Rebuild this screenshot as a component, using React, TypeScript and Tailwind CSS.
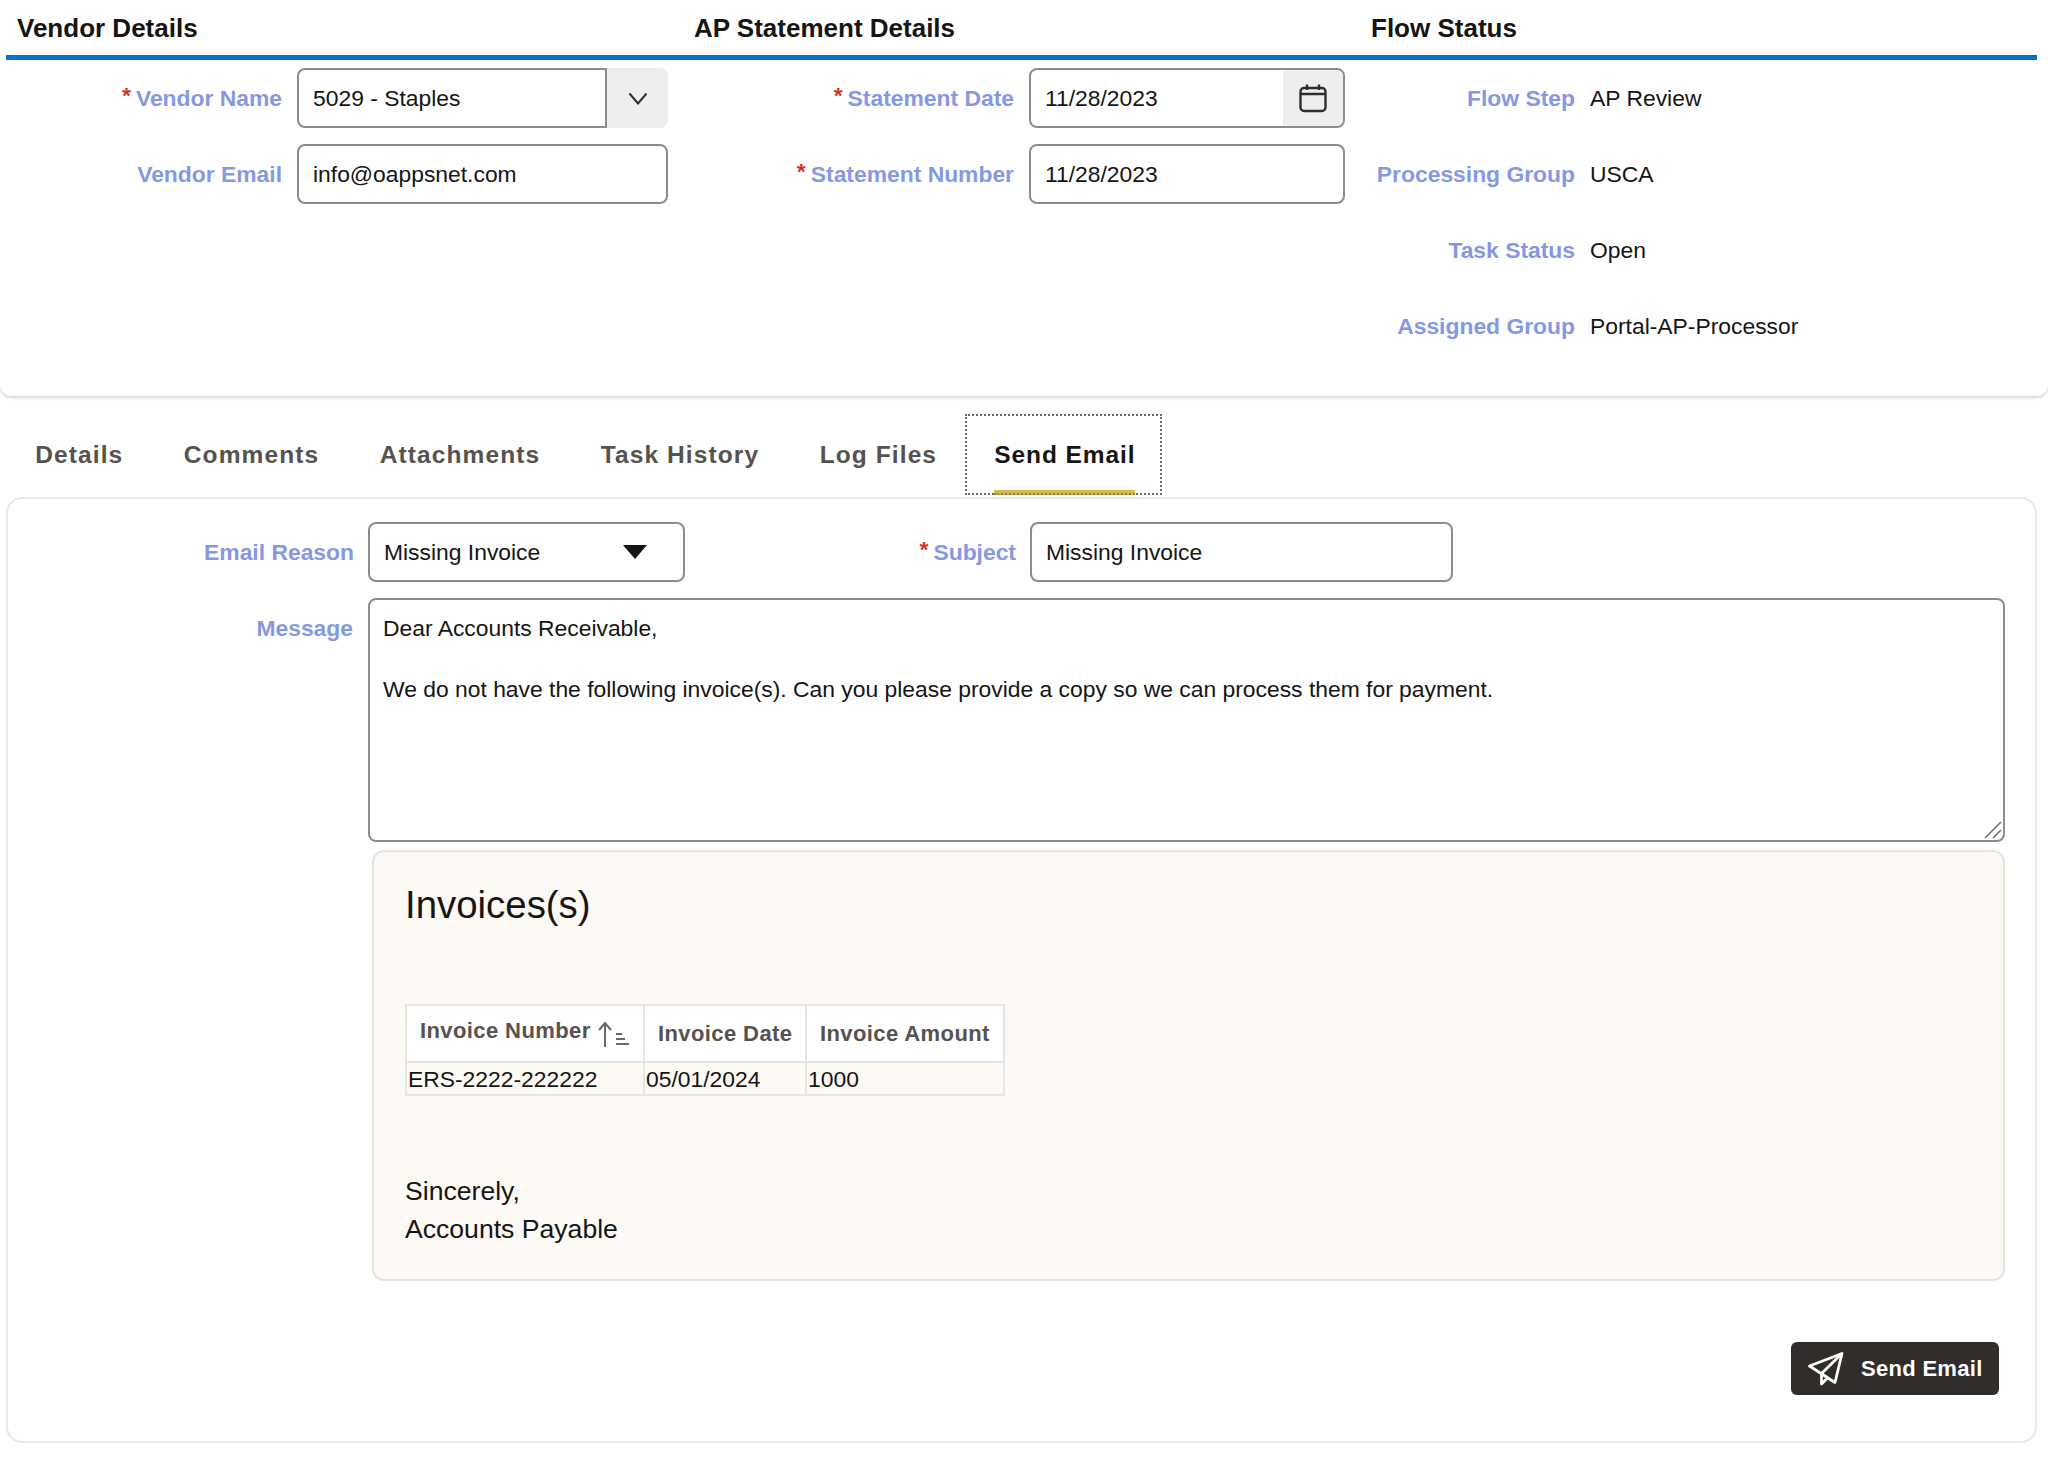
import React from "react";

const LABEL = "text-[22.86px] font-bold text-[#8598e4] leading-[30px] text-right";
const FIELD = "rounded-[8px] border-2 border-[#8c8c8c] bg-white h-[60px] flex items-center px-[14px] text-[22.86px] text-[#161513]";

function Label({ text, required, width }: { text: string; required?: boolean; width: string }) {
  return (
    <div className={`${width} shrink-0 flex justify-end items-center ${LABEL}`}>
      {required && <span className="text-[#d0342c] mr-[5px] relative -top-[3px]">*</span>}
      <span>{text}</span>
    </div>
  );
}

function Chevron() {
  return (
    <svg width="20" height="13" viewBox="0 0 20 13" fill="none" stroke="#312d2a" strokeWidth="2">
      <path d="M1.5 1.5 L10 11.5 L18.5 1.5" />
    </svg>
  );
}

function Calendar() {
  return (
    <svg width="30" height="30" viewBox="0 0 30 30" fill="none" stroke="#312d2a" strokeWidth="2.4">
      <rect x="2.5" y="5" width="25" height="23" rx="3.5" />
      <path d="M2.5 11 H27.5 M9 1.5 V7 M21 1.5 V7" />
    </svg>
  );
}

function Plane() {
  return (
    <svg width="36" height="34" viewBox="0 0 36 34" fill="none" stroke="#ffffff" strokeWidth="2.8" strokeLinejoin="round">
      <path d="M1.5 14 L34 1.5 L27 30.5 L1.5 14 Z" />
      <path d="M34 1.5 L13.5 21.5 L13.5 32 L19.5 26" />
    </svg>
  );
}

function SortIcon() {
  return (
    <svg width="34" height="28" viewBox="0 0 34 28" fill="none" stroke="#6b6865" strokeWidth="2">
      <path d="M9 27 V3 M3 10 L9 3 L15 10" />
      <path d="M20 14 H26 M20 19 H29 M20 24 H33" />
    </svg>
  );
}

const tabs = ["Details", "Comments", "Attachments", "Task History", "Log Files"];

export default function App() {
  return (
    <div className="w-[2048px] h-[1460px] bg-white overflow-hidden [font-family:'Liberation_Sans',Arial,sans-serif] text-[#161513]">
      {/* Summary section */}
      <section className="h-[396px] rounded-b-[12px] shadow-[0_2px_3px_rgba(0,0,0,0.16)] pl-[6px]">
        <div className="w-[2031px] h-[60px] border-b-[5px] border-[#0572ce] flex items-center text-[26px] font-bold leading-[32px] pt-[1px]">
          <div className="w-[688px] pl-[11px]">Vendor Details</div>
          <div className="w-[677px]">AP Statement Details</div>
          <div>Flow Status</div>
        </div>
        <div className="flex pt-[8px]">
          <div className="w-[678px] flex flex-col gap-[16px]">
            <div className="flex gap-[15px] h-[60px]">
              <Label text="Vendor Name" required width="w-[276px]" />
              <div className="w-[371px] h-[60px] flex">
                <div className={`${FIELD} flex-1 rounded-r-none`}>5029 - Staples</div>
                <div className="w-[61px] bg-[#eeeeee] rounded-r-[8px] flex items-center justify-center">
                  <Chevron />
                </div>
              </div>
            </div>
            <div className="flex gap-[15px] h-[60px]">
              <Label text="Vendor Email" width="w-[276px]" />
              <div className={`${FIELD} w-[371px]`}>info@oappsnet.com</div>
            </div>
          </div>
          <div className="w-[678px] flex flex-col gap-[16px]">
            <div className="flex gap-[15px] h-[60px]">
              <Label text="Statement Date" required width="w-[330px]" />
              <div className={`${FIELD} w-[316px] pr-0 justify-between overflow-hidden`}>
                <span>11/28/2023</span>
                <div className="w-[60px] h-full bg-[#eeeeee] flex items-center justify-center">
                  <Calendar />
                </div>
              </div>
            </div>
            <div className="flex gap-[15px] h-[60px]">
              <Label text="Statement Number" required width="w-[330px]" />
              <div className={`${FIELD} w-[316px]`}>11/28/2023</div>
            </div>
          </div>
          <div className="flex flex-col gap-[16px]">
            {[
              ["Flow Step", "AP Review"],
              ["Processing Group", "USCA"],
              ["Task Status", "Open"],
              ["Assigned Group", "Portal-AP-Processor"],
            ].map(([k, v]) => (
              <div key={k} className="flex gap-[15px] h-[60px] items-center">
                <Label text={k} width="w-[213px]" />
                <div className="text-[22.86px] leading-[30px]">{v}</div>
              </div>
            ))}
          </div>
        </div>
      </section>

      {/* Tabs */}
      <nav className="flex mt-[18px] h-[81px] pl-[5px] text-[24.5px] font-bold tracking-[1.1px] text-[#55524f]">
        {tabs.map((t) => (
          <div key={t} className="px-[30.25px] pt-[2px] flex items-center">{t}</div>
        ))}
        <div className="relative -ml-[2px] w-[197px] pl-[27px] pt-[2px] flex items-center tracking-[0.9px] border-2 border-dotted border-[#6b6b60] text-[#161513]">
          Send Email
          <span className="absolute left-[27px] w-[141px] -bottom-[2px] h-[5px] bg-[#d6b94f] border-b-2 border-dotted border-[#8a8050]" />
        </div>
      </nav>

      {/* Send email card */}
      <section className="relative mt-[2px] ml-[6px] w-[2031px] h-[946px] rounded-[16px] border-2 border-[#e9e9e8] pt-[23px] pl-[360px] pr-[29px]">
        <div className="flex h-[60px]">
          <div className="w-[317px] h-[60px] rounded-[8px] border-2 border-[#8c8c8c] flex items-center justify-between pl-[14px] pr-[36px] text-[22.86px] relative">
            <span>Missing Invoice</span>
            <svg width="24" height="14" viewBox="0 0 24 14" fill="#161513"><path d="M0 0 H24 L12 14 Z" /></svg>
            <div className="absolute right-[calc(100%+16px)] whitespace-nowrap text-[22.86px] font-bold text-[#8598e4]">Email Reason</div>
          </div>
          <div className="w-[345px] flex justify-end items-center pr-[14px] ml-0">
            <div className="flex items-center text-[22.86px] font-bold text-[#8598e4]">
              <span className="text-[#d0342c] mr-[5px] relative -top-[3px]">*</span>Subject
            </div>
          </div>
          <div className={`${FIELD} w-[423px]`}>Missing Invoice</div>
        </div>
        <div className="relative mt-[16px] w-[1637px] h-[244px]">
          <div className="absolute right-[calc(100%+15px)] top-[15px] whitespace-nowrap text-[22.86px] leading-[30px] font-bold text-[#8598e4]">Message</div>
          <textarea
            readOnly
            defaultValue={"Dear Accounts Receivable,\n\nWe do not have the following invoice(s). Can you please provide a copy so we can process them for payment."}
            className="block w-full h-full resize-none rounded-[8px] border-2 border-[#8c8c8c] px-[13px] pt-[13px] pb-[12px] text-[22.86px] leading-[30.5px] text-[#161513] outline-none"
          />
          <svg className="absolute right-[3px] bottom-[3px]" width="18" height="18" viewBox="0 0 18 18" fill="none" stroke="#6b6865" strokeWidth="1.5">
            <path d="M1 17 L17 1 M9 17 L17 9" />
          </svg>
        </div>
        <div className="ml-[4px] mt-[8px] w-[1633px] h-[431px] rounded-[12px] border-2 border-[#e7e4df] bg-[#fdf9f5] pl-[31px] pt-[28px] text-[#161513]">
          <h2 className="text-[38.4px] leading-[50px]">Invoices(s)</h2>
          <table className="mt-[74px] w-[600px] border-collapse text-[22.86px]">
            <thead>
              <tr className="h-[57px] bg-white text-[22px] font-bold tracking-[0.4px] text-[#55524f]">
                <th className="w-[238px] border-2 border-[#e8e6e2] text-left font-bold pl-[13px]">
                  <div className="flex items-center">
                    <span className="relative -top-[3px] whitespace-nowrap">Invoice Number</span>
                    <span className="ml-[5px] -mr-[6px]"><SortIcon /></span>
                  </div>
                </th>
                <th className="w-[162px] border-2 border-[#e8e6e2] text-left font-bold pl-[13px]">Invoice Date</th>
                <th className="border-2 border-[#e8e6e2] text-left font-bold pl-[13px]">Invoice Amount</th>
              </tr>
            </thead>
            <tbody>
              <tr className="h-[33px]">
                <td className="border-2 border-[#e8e6e2] pl-[1px] leading-[30px]">ERS-2222-222222</td>
                <td className="border-2 border-[#e8e6e2] pl-[1px] leading-[30px]">05/01/2024</td>
                <td className="border-2 border-[#e8e6e2] pl-[1px] leading-[30px]">1000</td>
              </tr>
            </tbody>
          </table>
          <p className="mt-[76px] text-[26.6px] leading-[38px]">Sincerely,</p>
          <p className="text-[26.6px] leading-[38px]">Accounts Payable</p>
        </div>
        <div className="flex justify-end mt-[61px] pr-[7px]">
          <button className="w-[208px] h-[53px] rounded-[6px] bg-[#312d2a] text-white flex items-center pl-[17px] gap-[17px] text-[22px] font-bold tracking-[0.3px]">
            <Plane />
            <span>Send Email</span>
          </button>
        </div>
      </section>
    </div>
  );
}
